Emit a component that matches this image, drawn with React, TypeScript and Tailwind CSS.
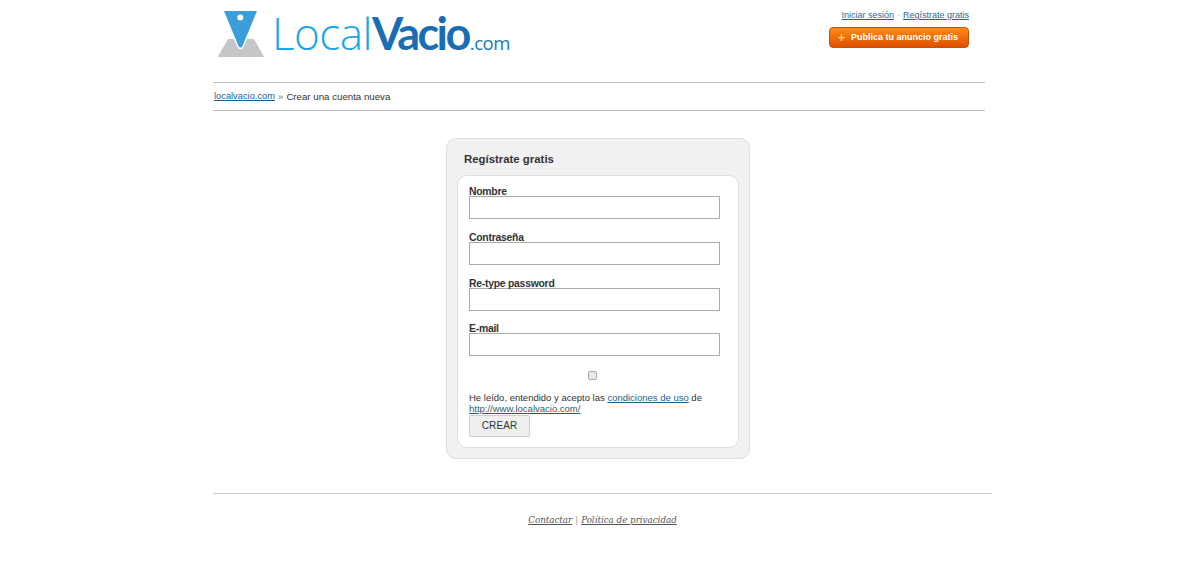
import React from "react";

const fields = ["Nombre", "Contraseña", "Re-type password", "E-mail"];

function LogoMark() {
  return (
    <svg width="48" height="48" viewBox="0 0 48 48" className="shrink-0">
      <path d="M11 29H37L47 47H0.5Z" fill="#c4c6c8" />
      <path d="M7 1H40L25.5 36Q23.5 39.5 21.5 36Z" fill="#3a9edb" stroke="#fff" strokeWidth="3" paintOrder="stroke" />
      <circle cx="23.3" cy="7.5" r="3" fill="#fff" />
    </svg>
  );
}

export default function App() {
  return (
    <div className="min-h-[571px] bg-white font-['Liberation_Sans',Arial,sans-serif] text-[#333]">
      <div className="ml-[213px] w-[779px]">
        {/* cabecera */}
        <div className="w-[772px]">
          <div className="flex h-[82px] justify-between">
            <div className="flex items-start pt-[10px] pl-[4px]">
              <LogoMark />
              <div className="mt-[-2px] ml-[7px] flex items-baseline whitespace-nowrap font-['Open_Sans',sans-serif] leading-[50px]">
                <span className="text-[44px] font-light tracking-[-0.5px] text-[#1ba7e0]">Local</span>
                <span className="font-['Lato',sans-serif] text-[45px] font-bold tracking-[-2.6px] text-[#1b6db3]">Vacio</span>
                <span className="ml-[1px] text-[18.5px] font-normal tracking-[-0.4px] text-[#1b78b8]">.com</span>
              </div>
            </div>
            <div className="mr-[16px] flex w-[141px] flex-col items-end pt-[10px]">
              <div className="text-[9px] leading-[11px] whitespace-nowrap text-[#bbb]">
                <a href="#" className="text-[#1f6a94] underline">Iniciar sesión</a>
                <span className="mx-[3px]">·</span>
                <a href="#" className="text-[#1f6a94] underline">Regístrate gratis</a>
              </div>
              <button className="mt-[6px] flex h-[21px] w-[140px] items-center justify-center gap-[6px] rounded-[4px] border border-[#c9500a] bg-gradient-to-b from-[#ff8a12] to-[#e04f02] pr-[2px] text-[9px] font-bold whitespace-nowrap text-white">
                <span className="text-[12px] leading-none font-bold text-[#ffd27a]">+</span>
                Publica tu anuncio gratis
              </button>
            </div>
          </div>
          <div className="flex h-[29px] items-center border-y border-[#bfbfbf] pt-px pl-px text-[9.7px] whitespace-nowrap">
            <a href="#" className="text-[9.3px] text-[#1a5f8c] underline">localvacio.com</a>
            <span className="mx-[3px] text-[#777]">»</span>
            <span>Crear una cuenta nueva</span>
          </div>
        </div>

        {/* registro */}
        <div className="mt-[27px] ml-[233px] h-[321px] w-[304px] rounded-[10px] border border-[#dedede] bg-[#f1f1f1] px-[10px] pt-[13px]">
          <h1 className="pl-[7px] text-[11.4px] leading-[15px] font-bold text-[#333]">Regístrate gratis</h1>
          <div className="mt-[8px] h-[273px] w-[282px] rounded-[10px] border border-[#dedede] bg-white px-[11px] pt-[10px]">
            {fields.map((name) => (
              <div key={name} className="mb-[12.8px]">
                <label className="block h-[10px] text-[10.4px] leading-[11px] font-bold tracking-[-0.25px] text-[#333]">{name}</label>
                <input type="text" className="block h-[23px] w-[251px] border border-[#aaa] bg-white" />
              </div>
            ))}
            <div className="mt-[14.6px] flex w-[246px] justify-center">
              <input type="checkbox" className="h-[9px] w-[9px] appearance-none rounded-[2px] border border-[#aaa] bg-[#e8e8e8]" />
            </div>
            <p className="mt-[12px] text-[9.5px] leading-[11px] text-[#333]">
              He leído, entendido y acepto las{" "}
              <a href="#" className="text-[#1a5f8c] underline">condiciones de uso</a> de
              <br />
              <a href="#" className="text-[#1a5f8c] underline">http://www.localvacio.com/</a>
            </p>
            <button className="mt-px block h-[22px] w-[61px] rounded-[2px] border border-[#ccc] bg-[#efefef] text-[10px] tracking-[0.1px] text-[#333]">CREAR</button>
          </div>
        </div>

        {/* pie */}
        <div className="mt-[34px] border-t border-[#ccc] pt-[19px] text-center font-['DejaVu_Serif_Condensed','DejaVu_Serif',Georgia,serif] text-[9.7px] leading-[14px] italic text-[#555]">
          <a href="#" className="underline">Contactar</a>
          <span className="mx-[3px] not-italic text-[#999]">|</span>
          <a href="#" className="underline">Política de privacidad</a>
        </div>
      </div>
    </div>
  );
}
